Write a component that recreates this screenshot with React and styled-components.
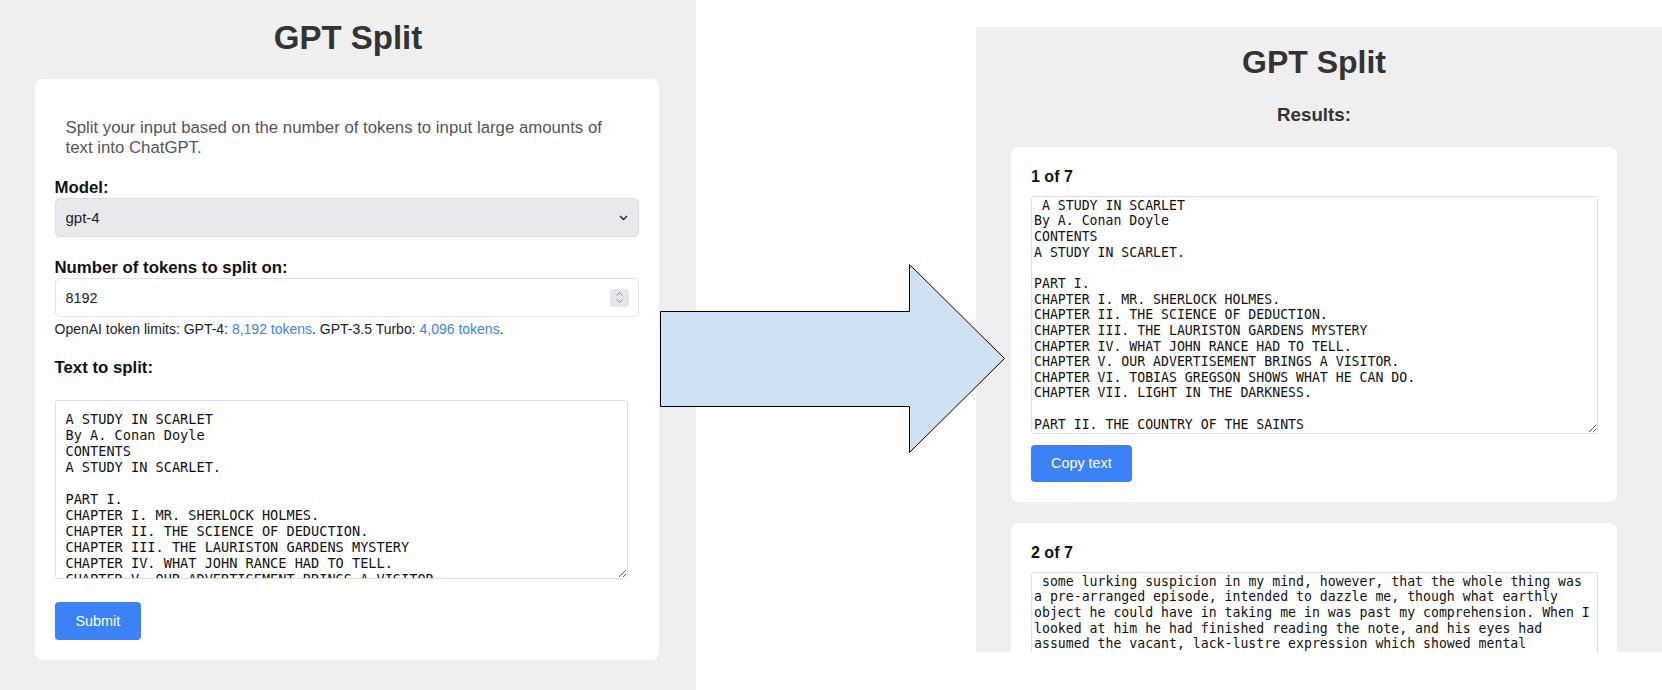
import React from "react";
import styled, { createGlobalStyle } from "styled-components";

const GlobalStyle = createGlobalStyle`
  html, body {
    margin: 0;
    padding: 0;
    background: #fff;
  }
  body {
    font-family: "Liberation Sans", Arial, sans-serif;
  }
  * {
    box-sizing: border-box;
  }
`;

const Canvas = styled.div`
  position: relative;
  display: flex;
  align-items: flex-start;
  gap: 280px;
  width: 1662px;
  height: 690px;
  overflow: hidden;
`;

const Panel = styled.section`
  flex: none;
  display: flex;
  flex-direction: column;
  align-items: center;
  background: #efefef;
  overflow: hidden;
`;

const FormPanel = styled(Panel)`
  width: 696px;
  height: 690px;
  padding-top: 19px;
`;

const ResultsPanel = styled(Panel)`
  width: 686px;
  height: 625px;
  margin-top: 27px;
  padding: 17px 45px 0 35px;
`;

const Title = styled.h1`
  margin: 0;
  font-size: ${(p) => p.$size}px;
  font-weight: 700;
  line-height: normal;
  color: #333;
`;

const Subtitle = styled.h3`
  margin: 22.6px 0 0;
  font-size: 18.72px;
  font-weight: 700;
  line-height: normal;
  color: #333;
`;

const Card = styled.div`
  background: #fff;
  border-radius: 8px;
  display: flex;
  flex-direction: column;
  align-items: flex-start;
`;

const FormCard = styled(Card)`
  width: 624px;
  margin: 22.4px 3px 0 0;
  padding: 21px 20px 20.7px 20px;
`;

const ResultCard = styled(Card)`
  width: 100%;
  margin-top: 21px;
  padding: 21px 19px 20px 20px;
  flex: none;
`;

const Description = styled.p`
  margin: 17.3px 0 0;
  padding: 0 11px;
  width: 100%;
  font-size: 16.8px;
  line-height: normal;
  color: #555;
`;

const Label = styled.label`
  display: block;
  margin-top: ${(p) => p.$gap}px;
  font-size: 16.8px;
  font-weight: 700;
  line-height: normal;
  color: #111;
`;

const SelectBox = styled.div`
  display: flex;
  align-items: center;
  width: 100%;
  height: 39.4px;
  padding: 0 10px 0 0;
  background: #e9e9ed;
  border: 1px solid #dcdce0;
  border-radius: 5px;
  color: #222;
`;

const NativeSelect = styled.select`
  flex: 1;
  height: 100%;
  padding: 0 10px;
  border: none;
  background: transparent;
  appearance: none;
  font-family: inherit;
  font-size: 15px;
  color: #222;
  outline: none;
`;

const InputBox = styled.div`
  display: flex;
  align-items: center;
  width: 100%;
  height: 39.5px;
  padding-right: 9px;
  background: #fff;
  border: 1px solid #e2e2e2;
  border-radius: 5px;
`;

const NumberField = styled.input`
  flex: 1;
  height: 100%;
  padding: 0 10px;
  border: none;
  background: transparent;
  font-family: inherit;
  font-size: 14.4px;
  color: #222;
  outline: none;
`;

const Stepper = styled.span`
  display: flex;
  align-items: center;
  justify-content: center;
  width: 19px;
  height: 18px;
  border-radius: 3px;
  background: #e6e6ea;
`;

const Hint = styled.div`
  margin-top: 3.2px;
  font-size: 14px;
  line-height: 17px;
  color: #222;

  a {
    color: #3b82f6;
    text-decoration: none;
  }
`;

const TextBox = styled.textarea`
  display: block;
  flex: none;
  margin-top: ${(p) => p.$gap}px;
  width: ${(p) => p.$width};
  height: ${(p) => p.$height}px;
  padding: ${(p) => p.$pad};
  border: 1px solid #dedede;
  border-radius: 3px;
  background: #fff;
  font-family: "DejaVu Sans Mono", "Liberation Mono", monospace;
  font-size: ${(p) => p.$font}px;
  line-height: ${(p) => p.$line}px;
  color: #111;
  scrollbar-width: none;
  outline: none;
`;

const Button = styled.button`
  flex: none;
  margin-top: ${(p) => p.$gap}px;
  height: ${(p) => p.$height}px;
  padding: 0 ${(p) => p.$pad}px;
  border: none;
  border-radius: 4px;
  background: #3b82f6;
  color: #fff;
  font-family: inherit;
  font-size: 14.4px;
  cursor: pointer;
`;

const ChunkLabel = styled.h4`
  margin: 0;
  font-size: 16px;
  font-weight: 700;
  line-height: normal;
  color: #111;
`;

const ArrowShape = styled.svg`
  position: absolute;
  left: 660px;
  top: 264px;
  overflow: visible;
`;

const bookStart = `A STUDY IN SCARLET
By A. Conan Doyle
CONTENTS
A STUDY IN SCARLET.

PART I.
CHAPTER I. MR. SHERLOCK HOLMES.
CHAPTER II. THE SCIENCE OF DEDUCTION.
CHAPTER III. THE LAURISTON GARDENS MYSTERY
CHAPTER IV. WHAT JOHN RANCE HAD TO TELL.
CHAPTER V. OUR ADVERTISEMENT BRINGS A VISITOR.
CHAPTER VI. TOBIAS GREGSON SHOWS WHAT HE CAN DO.
CHAPTER VII. LIGHT IN THE DARKNESS.

PART II. THE COUNTRY OF THE SAINTS`;

const chunks = [
  { text: " " + bookStart, height: 238 },
  {
    text: ` some lurking suspicion in my mind, however, that the whole thing was
a pre-arranged episode, intended to dazzle me, though what earthly
object he could have in taking me in was past my comprehension. When I
looked at him he had finished reading the note, and his eyes had
assumed the vacant, lack-lustre expression which showed mental
abstraction.`,
    height: 200,
  },
];

function Arrow() {
  return (
    <ArrowShape width="346" height="190" viewBox="0 0 346 190">
      <polygon
        points="0.5,47.5 249.5,47.5 249.5,0.5 344.5,94.5 249.5,188.5 249.5,142.5 0.5,142.5"
        fill="#cfe2f3"
        stroke="#000"
        strokeWidth="1"
      />
    </ArrowShape>
  );
}

function ChevronDown() {
  return (
    <svg width="9" height="6" viewBox="0 0 9 6">
      <path d="M1 1 L4.5 4.5 L8 1" fill="none" stroke="#222" strokeWidth="1.4" />
    </svg>
  );
}

function StepIcon() {
  return (
    <svg width="9" height="13" viewBox="0 0 9 13">
      <path d="M1.5 4.5 L4.5 1.5 L7.5 4.5" fill="none" stroke="#8a8a8e" strokeWidth="1" />
      <path d="M1.5 8.5 L4.5 11.5 L7.5 8.5" fill="none" stroke="#8a8a8e" strokeWidth="1" />
    </svg>
  );
}

export default function App() {
  return (
    <>
      <GlobalStyle />
      <Canvas>
        <FormPanel>
          <Title $size={33}>GPT Split</Title>
          <FormCard as="form" onSubmit={(e) => e.preventDefault()}>
            <Description>
              Split your input based on the number of tokens to input large amounts of text into
              ChatGPT.
            </Description>

            <Label $gap={20.3} htmlFor="model">Model:</Label>
            <SelectBox>
              <NativeSelect id="model" defaultValue="gpt-4">
                <option value="gpt-4">gpt-4</option>
                <option value="gpt-3.5-turbo">gpt-3.5-turbo</option>
              </NativeSelect>
              <ChevronDown />
            </SelectBox>

            <Label $gap={20.6} htmlFor="tokens">Number of tokens to split on:</Label>
            <InputBox>
              <NumberField id="tokens" type="text" inputMode="numeric" defaultValue="8192" />
              <Stepper>
                <StepIcon />
              </Stepper>
            </InputBox>
            <Hint>
              OpenAI token limits: GPT-4: <a href="#gpt4">8,192 tokens</a>. GPT-3.5 Turbo:{" "}
              <a href="#gpt35">4,096 tokens</a>.
            </Hint>

            <Label $gap={20.4} htmlFor="text">Text to split:</Label>
            <TextBox
              id="text"
              $gap={21.6}
              $width="calc(100% - 11px)"
              $height={179.3}
              $pad="10px 10px"
              $font={13.6}
              $line={16}
              defaultValue={bookStart}
            />

            <Button type="submit" $gap={22.6} $height={38} $pad={21}>
              Submit
            </Button>
          </FormCard>
        </FormPanel>

        <ResultsPanel>
          <Title $size={32}>GPT Split</Title>
          <Subtitle>Results:</Subtitle>
          {chunks.map((chunk, i) => (
            <ResultCard key={i}>
              <ChunkLabel>
                {i + 1} of 7
              </ChunkLabel>
              <TextBox
                $gap={10}
                $width="100%"
                $height={chunk.height}
                $pad="1px 2px"
                $font={13.2}
                $line={15.65}
                defaultValue={chunk.text}
              />
              <Button type="button" $gap={11} $height={37} $pad={20}>
                Copy text
              </Button>
            </ResultCard>
          ))}
        </ResultsPanel>

        <Arrow />
      </Canvas>
    </>
  );
}
